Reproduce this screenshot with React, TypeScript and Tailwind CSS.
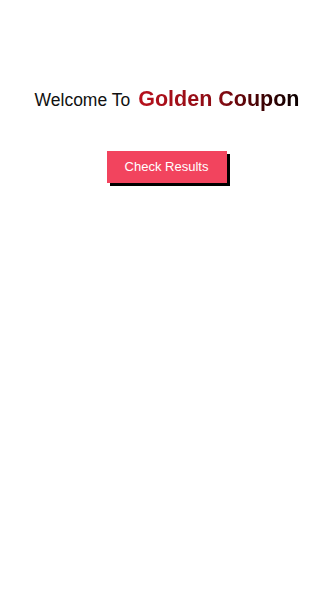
export default function App() {
  return (
    <div className="min-h-[592px] w-full bg-white flex flex-col items-center pt-[89px] font-['Liberation_Sans',Arial,sans-serif]">
      {/* Heading */}
      <h1 className="flex items-baseline gap-2 leading-none pl-[1px]">
        <span className="text-[17.5px] text-[#111]">Welcome To</span>
        <span className="text-[21.5px] font-bold bg-gradient-to-r from-[#b8101c] via-[#8a0c14] to-[#0a0000] bg-clip-text text-transparent">
          Golden Coupon
        </span>
      </h1>

      {/* Action */}
      <button className="mt-[40px] w-[120px] h-[32px] bg-[#f2445e] text-white text-[13px] shadow-[3px_3px_0_#000]">
        Check Results
      </button>
    </div>
  );
}
